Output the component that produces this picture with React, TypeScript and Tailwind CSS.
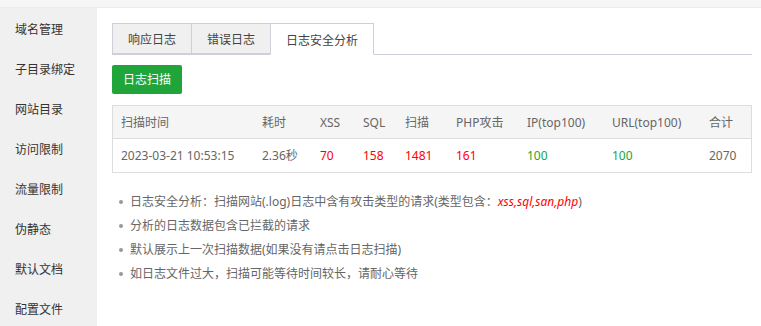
const menu = ['域名管理', '子目录绑定', '网站目录', '访问限制', '流量限制', '伪静态', '默认文档', '配置文件'];

const tabs = ['响应日志', '错误日志', '日志安全分析'];

const cols = [
  { label: '扫描时间', value: '2023-03-21 10:53:15', w: 'w-[141px]', color: 'text-[#666]' },
  { label: '耗时', value: '2.36秒', w: 'w-[58px]', color: 'text-[#666]' },
  { label: 'XSS', value: '70', w: 'w-[43px]', color: 'text-[#ff0000]' },
  { label: 'SQL', value: '158', w: 'w-[42px]', color: 'text-[#ff0000]' },
  { label: '扫描', value: '1481', w: 'w-[51px]', color: 'text-[#ff0000]' },
  { label: 'PHP攻击', value: '161', w: 'w-[71px]', color: 'text-[#ff0000]' },
  { label: 'IP(top100)', value: '100', w: 'w-[85px]', color: 'text-[#20a53a]' },
  { label: 'URL(top100)', value: '100', w: 'w-[97px]', color: 'text-[#20a53a]' },
  { label: '合计', value: '2070', w: 'flex-1', color: 'text-[#666]' },
];

const tips = [
  '分析的日志数据包含已拦截的请求',
  '默认展示上一次扫描数据(如果没有请点击日志扫描)',
  '如日志文件过大，扫描可能等待时间较长，请耐心等待',
];

export default function App() {
  return (
    <div className="w-[761px] h-[326px] overflow-hidden bg-[#f6f6f6] text-[12px] text-[#333] font-['Noto_Sans','Noto_Sans_CJK_SC',sans-serif]">
      <div className="h-[8px] border-b border-[#ececec]" />
      <div className="flex h-[318px]">
        <div className="w-[97px] shrink-0 bg-[#f0f0f0] pt-[12px]">
          {menu.map((m) => (
            <div key={m} className="h-[40px] pl-[15px] leading-[20px] text-[#333]">{m}</div>
          ))}
        </div>
        <div className="flex-1 bg-white pl-[15px] pr-[9px] pt-[15px]">
          <div className="flex border-b border-[#cfcfdb] h-[32px]">
            {tabs.map((t, i) => (
              <div
                key={t}
                className={
                  i === 2
                    ? 'px-[15px] h-[32px] pt-[2px] leading-[30px] bg-white border border-[#cfcfdb] border-b-white text-[#444] -mb-px'
                    : 'px-[15px] h-[31px] pt-[2px] leading-[28px] bg-[#f0f0f0] border border-[#cfcfdb] border-r-0 text-[#444]'
                }
              >
                {t}
              </div>
            ))}
          </div>
          <button className="mt-[10px] h-[29px] px-[11px] rounded-[2px] bg-[#20a53a] text-white text-[12px]">日志扫描</button>
          <div className="mt-[11px] border border-[#dddddd]">
            <div className="flex h-[33px] items-center bg-[#f5f5f5] border-b border-[#dddddd] pl-[8px] pt-[1px] text-[#666]">
              {cols.map((c) => (
                <div key={c.label} className={`${c.w} shrink-0`}>{c.label}</div>
              ))}
            </div>
            <div className="flex h-[33px] items-center pl-[8px] pt-[1px]">
              {cols.map((c) => (
                <div key={c.label} className={`${c.w} shrink-0 ${c.color}`}>{c.value}</div>
              ))}
            </div>
          </div>
          <ul className="mt-[17px] pl-[7px] text-[#666]">
            <li className="flex items-center h-[24px]">
              <span className="w-[4px] h-[4px] rounded-full bg-[#999] mr-[7px]" />
              日志安全分析：扫描网站(.log)日志中含有攻击类型的请求(类型包含：<span className="text-[#ff0000] italic">xss,sql,san,php</span>)
            </li>
            {tips.map((t) => (
              <li key={t} className="flex items-center h-[24px]">
                <span className="w-[4px] h-[4px] rounded-full bg-[#999] mr-[7px]" />
                {t}
              </li>
            ))}
          </ul>
        </div>
      </div>
    </div>
  );
}
